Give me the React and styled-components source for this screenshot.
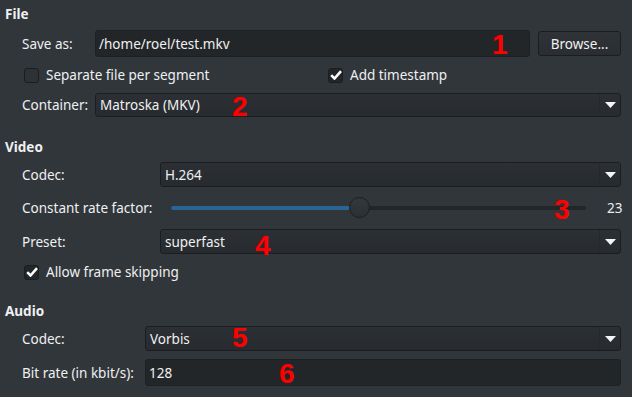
import styled, { createGlobalStyle } from "styled-components"

const GlobalStyle = createGlobalStyle`
    html, body {
        margin: 0;
        padding: 0;
        background: #31363b;
    }
`;

const Page = styled.div`
    position: relative;
    width: 632px;
    height: 397px;
    box-sizing: border-box;
    padding: 4px 11px 0 5px;
    background: #31363b;
    color: #eff0f1;
    font-family: "Noto Sans", "DejaVu Sans", sans-serif;
    font-size: 13.5px;
    overflow: hidden;
`;

const Section = styled.section`
    margin-top: ${p => p.$top || 0}px;
`;

const Heading = styled.h3`
    margin: 0;
    height: 20px;
    line-height: 20px;
    font-size: 13.5px;
    font-weight: bold;
`;

const Form = styled.div`
    display: grid;
    grid-template-columns: ${p => p.$label}px 1fr;
    row-gap: ${p => p.$gap}px;
    margin-top: ${p => p.$top}px;
    padding-left: 17px;
`;

const Label = styled.div`
    display: flex;
    align-items: center;
    white-space: nowrap;
`;

const FullRow = styled.div`
    grid-column: 1 / 3;
    display: flex;
    align-items: center;
    height: ${p => p.$h}px;
`;

const FieldRow = styled.div`
    display: flex;
    align-items: center;
    gap: 8px;
    height: ${p => p.$h}px;
`;

const TextInput = styled.div`
    flex: 1;
    align-self: stretch;
    display: flex;
    align-items: center;
    padding: 0 3px;
    background: #232629;
    border: 1px solid #1e2124;
    border-radius: 3px;
`;

const Button = styled.button`
    width: 83px;
    height: 25px;
    background: linear-gradient(#2f3337, #2a2e32);
    border: 1px solid #1b1e20;
    border-radius: 3px;
    color: #eff0f1;
    font: inherit;
`;

const Combo = styled.div`
    flex: 1;
    align-self: stretch;
    display: flex;
    align-items: center;
    background: linear-gradient(#2c3034, #272a2e);
    border: 1px solid #1b1e20;
    border-radius: 3px;
`;

const ComboText = styled.span`
    flex: 1;
    padding-left: 4px;
`;

const ArrowBox = styled.span`
    width: 20px;
    align-self: stretch;
    display: flex;
    align-items: center;
    justify-content: center;
    border-left: 1px solid #25292c;
`;

const Check = styled.span`
    width: 15px;
    height: 15px;
    margin: 0 7px 0 2px;
    box-sizing: border-box;
    border: 1px solid #1b1e20;
    border-radius: 3px;
    background: ${p => p.$on ? "#232629" : "#2e3236"};
    display: flex;
    align-items: center;
    justify-content: center;
`;

const CheckItem = styled.label`
    display: flex;
    align-items: center;
    width: ${p => p.$w ? p.$w + "px" : "auto"};
`;

const SliderWrap = styled.div`
    flex: 1;
    position: relative;
    height: 22px;
    margin: 0 13px 0 11px;
`;

const Groove = styled.div`
    position: absolute;
    left: 0;
    right: 0;
    top: 9px;
    height: 4px;
    border-radius: 2px;
    background: #232629;
`;

const Fill = styled.div`
    height: 100%;
    border-radius: 2px;
    background: #2a6496;
`;

const Handle = styled.div`
    position: absolute;
    top: 0;
    width: 21px;
    height: 21px;
    margin-left: -10px;
    box-sizing: border-box;
    border-radius: 50%;
    border: 1px solid #1b1e20;
    background: linear-gradient(#33383d, #2c3035);
`;

const Value = styled.span`
    width: 14px;
    color: #e8edf2;
`;

const Marker = styled.span`
    position: absolute;
    color: #ff0000;
    font-family: "Liberation Sans", Arial, sans-serif;
    font-weight: bold;
    font-size: 28px;
    line-height: 1;
`;

const Arrow = () => (
    <svg width="11" height="6" viewBox="0 0 11 6">
        <path d="M0 0h11L5.5 6z" fill="#f4f5f6" />
    </svg>
);

const Tick = () => (
    <svg width="12" height="10" viewBox="0 0 12 10">
        <path d="M1.2 5.2l3.3 3.3 6.5-7.3" fill="none" stroke="#fcfcfc" strokeWidth="2.6" />
    </svg>
);

const Select = ({ value }) => (
    <Combo>
        <ComboText>{value}</ComboText>
        <ArrowBox><Arrow /></ArrowBox>
    </Combo>
);

const Checkbox = ({ on, children, w }) => (
    <CheckItem $w={w}>
        <Check $on={on}>{on && <Tick />}</Check>
        {children}
    </CheckItem>
);

const markers = [
    { n: 1, x: 492, y: 31 },
    { n: 2, x: 232, y: 93 },
    { n: 3, x: 554, y: 196 },
    { n: 4, x: 255, y: 232 },
    { n: 5, x: 232, y: 324 },
    { n: 6, x: 279, y: 360 },
];

const crf = 0.452;

export default function App() {
    return (
        <Page>
            <GlobalStyle />
            <Section>
                <Heading>File</Heading>
                <Form $label={73} $gap={6} $top={6}>
                    <Label>Save as:</Label>
                    <FieldRow $h={27}>
                        <TextInput>/home/roel/test.mkv</TextInput>
                        <Button>Browse...</Button>
                    </FieldRow>
                    <FullRow $h={24}>
                        <Checkbox w={304}>Separate file per segment</Checkbox>
                        <Checkbox on>Add timestamp</Checkbox>
                    </FullRow>
                    <Label>Container:</Label>
                    <FieldRow $h={24}><Select value="Matroska (MKV)" /></FieldRow>
                </Form>
            </Section>

            <Section $top={20}>
                <Heading>Video</Heading>
                <Form $label={138} $gap={5} $top={5}>
                    <Label>Codec:</Label>
                    <FieldRow $h={25}><Select value="H.264" /></FieldRow>
                    <Label>Constant rate factor:</Label>
                    <FieldRow $h={32}>
                        <SliderWrap>
                            <Groove><Fill style={{ width: `${crf * 100}%` }} /></Groove>
                            <Handle style={{ left: `${crf * 100}%` }} />
                        </SliderWrap>
                        <Value>23</Value>
                    </FieldRow>
                    <Label>Preset:</Label>
                    <FieldRow $h={25}><Select value="superfast" /></FieldRow>
                    <FullRow $h={26}>
                        <Checkbox on>Allow frame skipping</Checkbox>
                    </FullRow>
                </Form>
            </Section>

            <Section $top={16}>
                <Heading>Audio</Heading>
                <Form $label={123} $gap={8} $top={5}>
                    <Label>Codec:</Label>
                    <FieldRow $h={25}><Select value="Vorbis" /></FieldRow>
                    <Label>Bit rate (in kbit/s):</Label>
                    <FieldRow $h={27}><TextInput>128</TextInput></FieldRow>
                </Form>
            </Section>

            {markers.map(m => (
                <Marker key={m.n} style={{ left: m.x, top: m.y }}>{m.n}</Marker>
            ))}
        </Page>
    )
}
